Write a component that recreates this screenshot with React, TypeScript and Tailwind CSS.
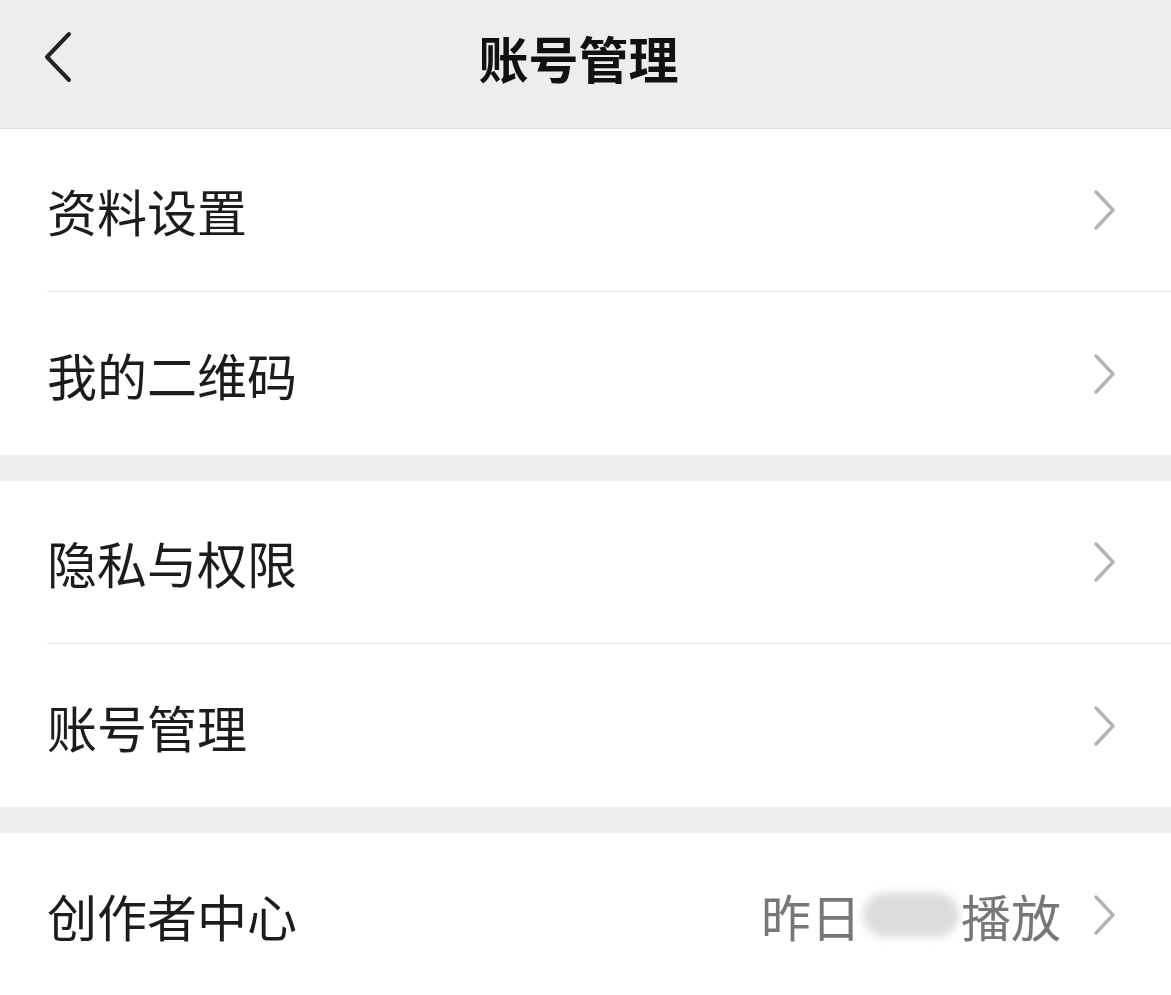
const font = { fontFamily: '"Noto Sans CJK SC", "Noto Sans", sans-serif' };

function Chevron() {
  return (
    <svg width="24" height="42" viewBox="0 0 24 42" className="shrink-0">
      <path d="M3 3 L20 21 L3 39" fill="none" stroke="#b3b3b3" strokeWidth="3.5" strokeLinecap="round" strokeLinejoin="round" />
    </svg>
  );
}

function Row({ label, extra, divider }: { label: string; extra?: React.ReactNode; divider?: boolean }) {
  return (
    <div className="shrink-0 bg-white pl-[47px]">
      <div className={`flex h-[163px] items-center pr-[54px] ${divider ? "border-b border-[#e6e6e6]" : ""}`}>
        <span className="flex-1 text-[50px] leading-none text-[#1c1c1c]">{label}</span>
        {extra}
        <Chevron />
      </div>
    </div>
  );
}

export default function App() {
  return (
    <div className="flex h-[995px] w-[1171px] flex-col overflow-hidden bg-[#ededed]" style={font}>
      <header className="relative flex h-[129px] shrink-0 items-center justify-center border-b border-[#dcdcdc] bg-[#ededed] pb-[14px] pr-[14px]">
        <svg width="30" height="54" viewBox="0 0 30 54" className="absolute left-[43px] top-[31px]">
          <path d="M26 3 L4 26 L26 49" fill="none" stroke="#222" strokeWidth="4" strokeLinecap="round" strokeLinejoin="round" />
        </svg>
        <h1 className="text-[50px] font-semibold leading-none text-[#111]">账号管理</h1>
      </header>

      <Row label="资料设置" divider />
      <Row label="我的二维码" />
      <div className="h-[26px] shrink-0" />
      <Row label="隐私与权限" divider />
      <Row label="账号管理" />
      <div className="h-[26px] shrink-0" />
      <Row
        label="创作者中心"
        extra={
          <span className="mr-[32px] flex items-center text-[50px] leading-none text-[#777]">
            昨日
            <span className="mx-[2px] inline-block h-[44px] w-[96px] rounded-full bg-[#dcdcdc] blur-[4px]" />
            播放
          </span>
        }
      />
      <div className="flex-1 border-t border-[#e6e6e6] bg-white" />
    </div>
  );
}
